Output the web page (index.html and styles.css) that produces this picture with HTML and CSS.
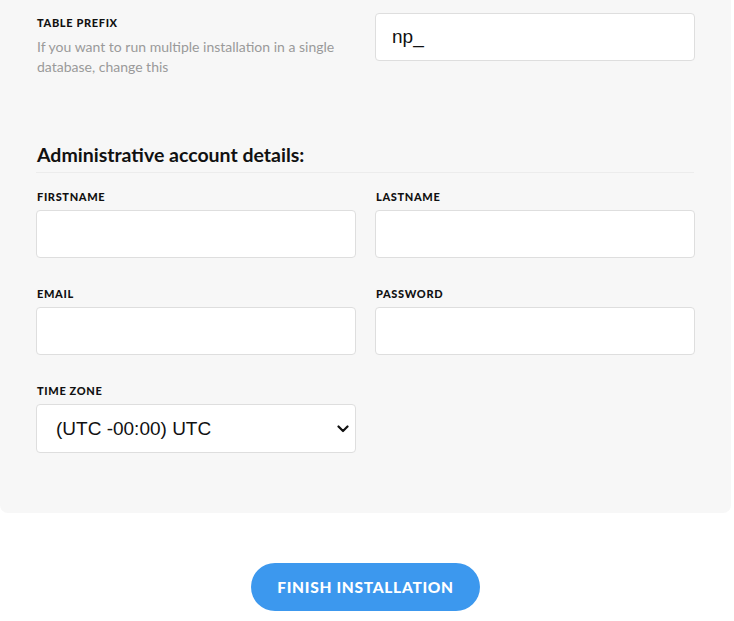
FILE: index.html
```html
<!DOCTYPE html>
<html>
<head>
<meta charset="utf-8">
<link rel="stylesheet" href="styles.css">
</head>
<body>
<div class="panel">
  <div class="grid top-row">
    <div class="prefix-info">
      <div class="label">Table prefix</div>
      <p class="desc">If you want to run multiple installation in a single database, change this</p>
    </div>
    <div>
      <input class="input" type="text" value="np_">
    </div>
  </div>

  <h2 class="heading">Administrative account details:</h2>

  <div class="grid">
    <div class="field">
      <div class="label">Firstname</div>
      <input class="input" type="text">
    </div>
    <div class="field">
      <div class="label">Lastname</div>
      <input class="input" type="text">
    </div>
    <div class="field">
      <div class="label">Email</div>
      <input class="input" type="text">
    </div>
    <div class="field">
      <div class="label">Password</div>
      <input class="input" type="password">
    </div>
    <div class="field">
      <div class="label">Time zone</div>
      <div class="select-wrap">
        <select class="input select">
          <option>(UTC -00:00) UTC</option>
        </select>
        <svg class="chevron" width="12" height="8" viewBox="0 0 12 8"><path d="M1.5 1.5 L6 6 L10.5 1.5" fill="none" stroke="#111" stroke-width="2.2" stroke-linecap="round" stroke-linejoin="round"/></svg>
      </div>
    </div>
  </div>
</div>
<div class="actions">
  <button class="finish">Finish installation</button>
</div>
</body>
</html>
```

FILE: styles.css
```css
* { box-sizing: border-box; }
html, body { margin: 0; padding: 0; background: #fff; }
body { font-family: Lato, "Liberation Sans", sans-serif; color: #111; }

.panel {
  width: 731px;
  background: #f7f7f7;
  border-radius: 0 0 8px 8px;
  padding: 13px 37px 31px 36px;
}

.grid {
  display: grid;
  grid-template-columns: 320px 320px;
  column-gap: 19px;
}

.top-row { align-items: start; }

.prefix-info { padding-top: 3px; padding-left: 1px; }

.label {
  font-size: 11px;
  line-height: 14px;
  font-weight: 900;
  text-transform: uppercase;
  color: #111;
  letter-spacing: 0.65px;
}

.field .label { padding-left: 1px; margin-bottom: 6px; }
.field { margin-bottom: 29px; }

.desc {
  margin: 7px 0 0;
  font-size: 14px;
  line-height: 20px;
  color: #9a9a9a;
}

.input {
  display: block;
  width: 100%;
  height: 48px;
  background: #fff;
  border: 1px solid #dedede;
  border-radius: 4px;
  padding: 0 16px;
  font-family: "Liberation Sans", Arial, sans-serif;
  font-size: 19px;
  color: #111;
  outline: none;
}

.select-wrap { position: relative; }
.select {
  appearance: none;
  -webkit-appearance: none;
  height: 49px;
  padding-left: 19px;
}
.chevron {
  position: absolute;
  right: 7px;
  top: 21px;
  pointer-events: none;
}

.heading {
  margin: 66px 0 17px;
  padding: 0 0 5px 1px;
  font-size: 19.5px;
  line-height: 24px;
  font-weight: 700;
  border-bottom: 1px solid #ececec;
}

.actions {
  display: flex;
  justify-content: center;
  width: 731px;
  padding-top: 50px;
}

.finish {
  width: 229px;
  height: 48px;
  border: none;
  border-radius: 24px;
  background: #3c98ee;
  color: #fff;
  font-family: Lato, "Liberation Sans", sans-serif;
  font-weight: 900;
  font-size: 15.5px;
  text-transform: uppercase;
  letter-spacing: 0.7px;
}
```
